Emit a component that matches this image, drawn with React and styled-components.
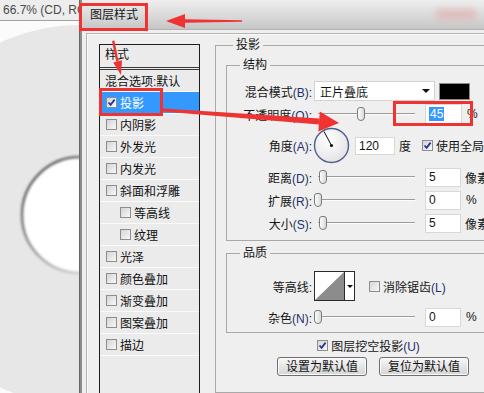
import React from 'react'
import styled, { createGlobalStyle } from 'styled-components'

const Global = createGlobalStyle`
  html, body { margin: 0; padding: 0; background: #fff; }
  body {
    font-family: "Liberation Sans", "Noto Sans CJK SC", sans-serif;
    font-size: 12px;
    color: #151515;
  }
  * { box-sizing: border-box; }
`

const Screen = styled.div`
  position: relative;
  width: 484px;
  height: 393px;
  overflow: hidden;
  display: flex;
`

const Canvas = styled.div`
  width: 80px;
  flex: none;
  display: flex;
  flex-direction: column;
`

const DocTab = styled.div`
  height: 21px;
  line-height: 20px;
  padding-left: 3px;
  background: #ededed;
  border-bottom: 1px solid #a2a2a2;
  color: #4a4a4a;
  font-size: 12px;
  white-space: nowrap;
  overflow: hidden;
`

const Art = styled.svg`
  display: block;
  flex: 1;
  background: #fbfbfb;
`

const Dialog = styled.div`
  flex: none;
  width: 560px;
  display: flex;
  flex-direction: column;
  background: #efefef;
  border-left: 2px solid #8c8c8c;
  box-shadow: -1px 0 0 #666;
`

const TitleBar = styled.div`
  height: 30px;
  display: flex;
  align-items: center;
  padding-left: 8px;
  background: linear-gradient(180deg, #eeeeee 0%, #d9d9d9 55%, #c6c6c6 100%);
  border-bottom: 1px solid #b3b3b3;
  line-height: 14px;
`

const CloseHint = styled.span`
  margin-left: 298px;
  width: 40px;
  height: 11px;
  border-radius: 4px;
  background: #e2b2b2;
  opacity: 0.7;
  filter: blur(3px);
`

const Body = styled.div`
  flex: 1;
  display: flex;
  padding: 3px 0 0 4px;
`

const Panel = styled.div`
  flex: 1;
  display: flex;
  align-items: stretch;
  gap: 15px;
  padding: 10px 0 0 12px;
  border-top: 1px solid #b4b4b4;
  border-left: 1px solid #b4b4b4;
  box-shadow: inset 1px 1px 0 #fbfbfb;
`

const StyleList = styled.div`
  width: 101px;
  flex: none;
  border: 1px solid #1e1e1e;
  border-bottom: none;
  background: #ebebeb;
`

const ListHead = styled.div`
  height: 25px;
  padding: 0 0 0 5px;
  line-height: 21px;
  border-bottom: 3px double #3a3a3a;
`

const ListItem = styled.div`
  height: 22px;
  display: flex;
  align-items: center;
  gap: 3px;
  padding-left: ${p => (p.$plain ? 5 : p.$indent ? 20 : 6)}px;
  border-bottom: 1px solid #fafafa;
  background: ${p => (p.$selected ? '#3399ff' : 'transparent')};
  color: ${p => (p.$selected ? '#fff' : '#111')};
  white-space: nowrap;
`

const Box = styled.span`
  width: 11px;
  height: 11px;
  flex: none;
  display: inline-flex;
  border: 1px solid #8d8d8d;
  background: linear-gradient(135deg, #d4d4d4, #f8f8f8);
  margin-left: ${p => p.$ml || 0}px;
`

const Group = styled.fieldset`
  margin: ${p => p.$mt || 0}px 0 0 0;
  padding: ${p => p.$pad};
  width: ${p => p.$w}px;
  border: 1px solid #a9a9a9;
  min-width: 0;
`

const Legend = styled.legend`
  margin-left: ${p => p.$ml}px;
  padding: 0 3px;
  line-height: 14px;
  font-size: 12px;
`

const Rows = styled.div`
  display: flex;
  flex-direction: column;
  gap: ${p => p.$gap}px;
`

const Row = styled.div`
  display: flex;
  align-items: center;
  height: ${p => p.$h || 20}px;
  white-space: nowrap;
`

const Label = styled.span`
  width: 75px;
  margin-right: 2px;
  flex: none;
  text-align: right;
`

const Key = styled.span`
  color: #25306a;
`

const Select = styled.div`
  width: 121px;
  height: 20px;
  display: flex;
  align-items: center;
  justify-content: space-between;
  padding: 0 4px 0 5px;
  background: #fff;
  border: 1px solid #d2d2d2;
`

const Caret = styled.span`
  width: 0;
  height: 0;
  border-left: ${p => p.$s || 4}px solid transparent;
  border-right: ${p => p.$s || 4}px solid transparent;
  border-top: ${p => p.$s || 4}px solid #111;
`

const Swatch = styled.span`
  width: 31px;
  height: 17px;
  margin-left: 4px;
  background: #000;
  border: 1px solid #8a8a8a;
`

const SliderBox = styled.div`
  position: relative;
  width: 104px;
  height: 20px;
  flex: none;
  padding: 9px 3px 0 4px;
`

const Track = styled.div`
  height: 2px;
  border-top: 1px solid #9c9c9c;
  border-bottom: 1px solid #fdfdfd;
`

const Thumb = styled.span`
  position: absolute;
  top: 3px;
  left: ${p => p.$pos}px;
  width: 8px;
  height: 14px;
  border: 1px solid #7a7a7a;
  border-radius: 3px 3px 4px 4px;
  background: linear-gradient(90deg, #fdfdfd, #d8d8d8);
`

const Field = styled.div`
  width: ${p => p.$w || 36}px;
  height: ${p => p.$h || 19}px;
  margin-left: ${p => p.$ml ?? 7}px;
  display: flex;
  align-items: center;
  padding-left: 3px;
  background: #fff;
  border: 1px solid #d8d8d8;
  font-size: 12px;
`

const Picked = styled.span`
  background: #3399ff;
  color: #fff;
  padding: 0 1px;
`

const Unit = styled.span`
  margin-left: ${p => p.$ml || 5}px;
`

const Dial = styled.svg`
  display: block;
  margin-left: -1px;
  flex: none;
`

const ContourBox = styled.div`
  width: 41px;
  height: 30px;
  display: flex;
  border: 1px solid #2a2a2a;
  background: #fff;
`

const Drop = styled.div`
  flex: 1;
  display: flex;
  align-items: center;
  justify-content: center;
  border-left: 1px solid #2a2a2a;
`

const Footer = styled.div`
  display: flex;
  justify-content: center;
  align-items: center;
  gap: ${p => p.$gap || 0}px;
  margin-top: ${p => p.$mt}px;
  padding-right: ${p => p.$pr || 0}px;
  height: ${p => p.$h}px;
  white-space: nowrap;
`

const Button = styled.button`
  width: 90px;
  height: 19px;
  padding: 0;
  font: inherit;
  font-size: 12px;
  line-height: 16px;
  color: #111;
  border: 1px solid #6f6f6f;
  border-radius: 3px;
  background: linear-gradient(180deg, #f8f8f8 0%, #e6e6e6 50%, #d5d5d5 100%);
  box-shadow: inset 0 0 0 1px #fbfbfb;
`

const Marks = styled.svg`
  position: absolute;
  left: 0;
  top: 0;
  pointer-events: none;
`

function Check({ checked, ml }) {
  return (
    <Box $ml={ml}>
      {checked && (
        <svg width="9" height="9" viewBox="0 0 9 9">
          <path d="M1.5 4.5 L3.6 6.8 L7.6 1.6" stroke="#23379a" strokeWidth="1.8" fill="none" />
        </svg>
      )}
    </Box>
  )
}

function Slider({ pos }) {
  return (
    <SliderBox>
      <Track />
      <Thumb $pos={pos} />
    </SliderBox>
  )
}

const styles = [
  { t: '混合选项:默认', plain: true },
  { t: '投影', checked: true, selected: true },
  { t: '内阴影' },
  { t: '外发光' },
  { t: '内发光' },
  { t: '斜面和浮雕' },
  { t: '等高线', indent: true },
  { t: '纹理', indent: true },
  { t: '光泽' },
  { t: '颜色叠加' },
  { t: '渐变叠加' },
  { t: '图案叠加' },
  { t: '描边' },
]

function CanvasArt() {
  return (
    <Art width="80" height="372" viewBox="0 0 80 372">
      <defs>
        <linearGradient id="rim" x1="0" y1="0" x2="1" y2="1">
          <stop offset="0" stopColor="#5e5e5e" />
          <stop offset="0.55" stopColor="#b8b8b8" />
          <stop offset="1" stopColor="#f2f2f2" />
        </linearGradient>
        <filter id="soft">
          <feGaussianBlur stdDeviation="0.9" />
        </filter>
      </defs>
      <circle cx="80" cy="194" r="190" fill="#e7e7e7" />
      <circle cx="80" cy="194" r="58" fill="#fff" />
      <circle cx="80" cy="194" r="58" fill="none" stroke="url(#rim)" strokeWidth="3" filter="url(#soft)" />
    </Art>
  )
}

export default function App() {
  const red = '#ef3232'
  return (
    <>
      <Global />
      <Screen>
        <Canvas>
          <DocTab>66.7% (CD, RGB/8)</DocTab>
          <CanvasArt />
        </Canvas>

        <Dialog>
          <TitleBar>
            <span>图层样式</span>
            <CloseHint />
          </TitleBar>
          <Body>
            <Panel>
              <StyleList>
                <ListHead>样式</ListHead>
                {styles.map(s => (
                  <ListItem key={s.t} $plain={s.plain} $indent={s.indent} $selected={s.selected}>
                    {!s.plain && <Check checked={s.checked} />}
                    <span>{s.t}</span>
                  </ListItem>
                ))}
              </StyleList>

              <Group $mt={-6} $pad="6px 10px 0 10px" $w={316}>
                <Legend $ml={7}>投影</Legend>

                <Group $pad="9px 0 7px 10px" $w={294}>
                  <Legend $ml={3}>结构</Legend>
                  <Rows $gap={3}>
                    <Row>
                      <Label>混合模式<Key>(B)</Key>:</Label>
                      <Select>
                        <span>正片叠底</span>
                        <Caret />
                      </Select>
                      <Swatch />
                    </Row>
                    <Row>
                      <Label>不透明度<Key>(O)</Key>:</Label>
                      <Slider pos={43} />
                      <Field $w={37} $h={20}><Picked>45</Picked></Field>
                      <Unit>%</Unit>
                    </Row>
                    <Row $h={37}>
                      <Label>角度<Key>(A)</Key>:</Label>
                      <Dial width="37" height="37" viewBox="0 0 37 37">
                        <defs>
                          <radialGradient id="face" cx="0.4" cy="0.35" r="0.7">
                            <stop offset="0" stopColor="#ffffff" />
                            <stop offset="1" stopColor="#e2e2e2" />
                          </radialGradient>
                        </defs>
                        <circle cx="18.5" cy="18.5" r="17" fill="url(#face)" stroke="#4f5f8c" strokeWidth="1.4" />
                        <line x1="18.5" y1="18.5" x2="11" y2="4.5" stroke="#111" strokeWidth="1" />
                        <circle cx="18.5" cy="18.5" r="1.6" fill="#111" />
                      </Dial>
                      <Field $ml={5} $w={40} $h={18}>120</Field>
                      <Unit $ml={4}>度</Unit>
                      <Check checked ml={11} />
                      <Unit $ml={3}>使用全局光<Key>(G)</Key></Unit>
                    </Row>
                    <Row>
                      <Label>距离<Key>(D)</Key>:</Label>
                      <Slider pos={5} />
                      <Field>5</Field>
                      <Unit $ml={4}>像素</Unit>
                    </Row>
                    <Row>
                      <Label>扩展<Key>(R)</Key>:</Label>
                      <Slider pos={0} />
                      <Field>0</Field>
                      <Unit>%</Unit>
                    </Row>
                    <Row>
                      <Label>大小<Key>(S)</Key>:</Label>
                      <Slider pos={5} />
                      <Field>5</Field>
                      <Unit $ml={4}>像素</Unit>
                    </Row>
                  </Rows>
                </Group>

                <Group $mt={5} $pad="11px 0 5px 10px" $w={294}>
                  <Legend $ml={3}>品质</Legend>
                  <Rows $gap={6}>
                    <Row $h={30}>
                      <Label>等高线:</Label>
                      <ContourBox>
                        <svg width="29" height="28" viewBox="0 0 29 28">
                          <polygon points="0,28 29,0 29,28" fill="#8c8c8c" />
                        </svg>
                        <Drop><Caret $s={3} /></Drop>
                      </ContourBox>
                      <Check ml={14} />
                      <Unit $ml={3}>消除锯齿<Key>(L)</Key></Unit>
                    </Row>
                    <Row>
                      <Label>杂色<Key>(N)</Key>:</Label>
                      <Slider pos={0} />
                      <Field>0</Field>
                      <Unit>%</Unit>
                    </Row>
                  </Rows>
                </Group>

                <Footer $mt={6} $h={13} $pr={9}>
                  <Check checked />
                  <Unit $ml={3}>图层挖空投影<Key>(U)</Key></Unit>
                </Footer>
                <Footer $mt={5} $h={19} $gap={12}>
                  <Button>设置为默认值</Button>
                  <Button>复位为默认值</Button>
                </Footer>
              </Group>
            </Panel>
          </Body>
        </Dialog>

        <Marks width="484" height="393" viewBox="0 0 484 393">
          <g fill="none" stroke={red} strokeWidth="3">
            <rect x="80.5" y="4.5" width="66" height="25" />
            <rect x="100.5" y="89.5" width="61" height="25" />
            <rect x="394.5" y="102.5" width="77" height="22" />
          </g>
          <g fill={red}>
            <polygon points="166,21 185,14 185,28" />
            <polygon points="184,19.2 242,20.2 242,21.8 184,22.8" />
            <polygon points="112,41 114.4,40.6 118.6,61.2 116.2,61.6" />
            <polygon points="121,75 122,60.3 113.2,62.5" />
            <polygon points="162.9,111.5 163.1,108.5 319.3,118.5 318.8,124.5" />
            <polygon points="339,123 318.3,131.5 319.8,111.5" />
          </g>
        </Marks>
      </Screen>
    </>
  )
}
